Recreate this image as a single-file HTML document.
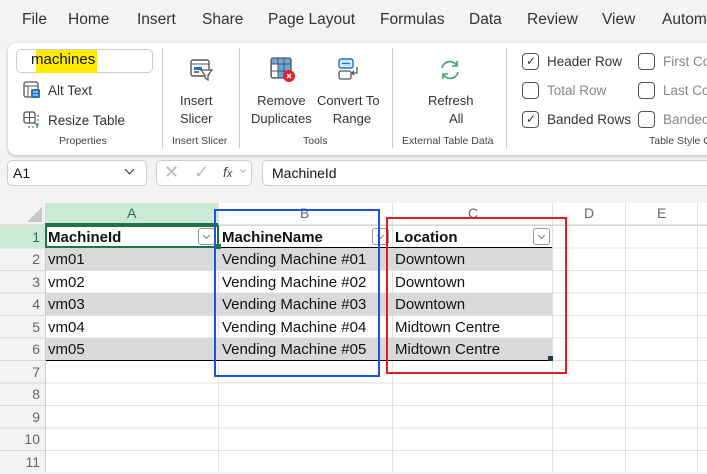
<!DOCTYPE html>
<html><head><meta charset="utf-8"><style>
*{margin:0;padding:0;box-sizing:border-box}
body{width:707px;height:472px;overflow:hidden;background:#f3f3f3;font-family:"Liberation Sans",sans-serif;position:relative;color:#222}
.a{position:absolute;white-space:nowrap}
.tab{top:11px;font-size:15.5px;color:#333}
.rib{left:8px;top:43px;width:720px;height:112px;background:#fff;border-radius:8px;box-shadow:0 1px 3px rgba(0,0,0,.25)}
.sep{width:1px;background:#ccc;top:48px;height:100px}
.lbl{font-size:10.5px;color:#444;top:135px}
.btn{font-size:13px;color:#333;text-align:center;line-height:18px}
.cb{width:17px;height:17px;border:1px solid #555;border-radius:4px;background:#fff}
.ck{font-size:13.5px;color:#333}
.dim{color:#888}
.cell{font-size:15px;color:#111;height:22px;line-height:23px}
.rh{left:0;width:45px;text-align:right;padding-right:5px;font-size:14px;color:#666;height:22px;line-height:23px}
.dd{width:17px;height:17px;border:1px solid #999;border-radius:3px;background:#fff}
.dd:after{content:"";position:absolute;left:5px;top:4px;width:4px;height:4px;border-right:1px solid #777;border-bottom:1px solid #777;transform:rotate(45deg)}
</style></head><body>
<div class="a tab" style="left:22px">File</div>
<div class="a tab" style="left:68px">Home</div>
<div class="a tab" style="left:137px">Insert</div>
<div class="a tab" style="left:202px">Share</div>
<div class="a tab" style="left:268px">Page Layout</div>
<div class="a tab" style="left:380px">Formulas</div>
<div class="a tab" style="left:469px">Data</div>
<div class="a tab" style="left:527px">Review</div>
<div class="a tab" style="left:602px">View</div>
<div class="a tab" style="left:662px">Autom</div>

<div class="a rib"></div>
<div class="a" style="left:16px;top:49px;width:137px;height:24px;border:1px solid #ccc;border-radius:5px;background:#fff"></div>
<div class="a" style="left:36px;top:50px;width:61px;height:23px;background:#ffeb00"></div>
<div class="a" style="left:31px;top:51px;font-size:15px;color:#111">machines</div>
<svg class="a" style="left:23px;top:81px" width="18" height="18" viewBox="0 0 18 18"><rect x="1" y="1" width="14" height="15" rx="2" fill="none" stroke="#555" stroke-width="1.3"/><line x1="1" y1="5" x2="15" y2="5" stroke="#555"/><line x1="5" y1="5" x2="5" y2="16" stroke="#555"/><rect x="8" y="8" width="9" height="9" rx="1.5" fill="#1e73c9"/><line x1="10" y1="11" x2="15" y2="11" stroke="#fff"/><line x1="10" y1="14" x2="15" y2="14" stroke="#fff"/></svg>
<div class="a ck" style="left:48px;top:83px">Alt Text</div>
<svg class="a" style="left:23px;top:111px" width="18" height="18" viewBox="0 0 18 18"><rect x="1" y="1" width="11" height="11" rx="2" fill="none" stroke="#555" stroke-width="1.3"/><line x1="6.5" y1="1" x2="6.5" y2="12" stroke="#555"/><line x1="1" y1="6.5" x2="12" y2="6.5" stroke="#555"/><path d="M15 4v12H3" fill="none" stroke="#555" stroke-dasharray="2 2"/><path d="M11 11l4 4" stroke="#1e73c9" stroke-width="1.4"/></svg>
<div class="a ck" style="left:48px;top:113px">Resize Table</div>
<div class="a lbl" style="left:59px">Properties</div>
<div class="a sep" style="left:162px"></div>

<svg class="a" style="left:190px;top:58px" width="24" height="24" viewBox="0 0 24 24"><rect x="1" y="2" width="18" height="16" rx="2" fill="none" stroke="#555" stroke-width="1.4"/><line x1="1" y1="6" x2="19" y2="6" stroke="#555"/><rect x="4" y="9" width="8" height="3" fill="#1e73c9"/><rect x="4" y="13" width="5" height="2" fill="#777"/><path d="M11 12h11l-4 5v5l-3-2v-3z" fill="#fff" stroke="#555" stroke-width="1.2"/></svg>
<div class="a btn" style="left:180px;top:92px">Insert<br>Slicer</div>
<div class="a lbl" style="left:172px">Insert Slicer</div>
<div class="a sep" style="left:239px"></div>

<svg class="a" style="left:270px;top:57px" width="26" height="26" viewBox="0 0 26 26"><rect x="1" y="1" width="20" height="20" rx="2" fill="#6aa6e0" stroke="#555" stroke-width="1.3"/><rect x="2" y="7" width="6" height="13" fill="#fff"/><line x1="1" y1="7" x2="21" y2="7" stroke="#555"/><line x1="8" y1="1" x2="8" y2="21" stroke="#555"/><line x1="14" y1="1" x2="14" y2="21" stroke="#555"/><line x1="1" y1="14" x2="21" y2="14" stroke="#555"/><circle cx="19" cy="19" r="6" fill="#e0262c"/><path d="M17 17l4 4M21 17l-4 4" stroke="#fff" stroke-width="1.3"/></svg>
<div class="a btn" style="left:251px;top:92px">Remove<br>Duplicates</div>
<svg class="a" style="left:337px;top:57px" width="24" height="24" viewBox="0 0 24 24"><rect x="2" y="2" width="14" height="9" rx="2" fill="#d6e8fa" stroke="#1e73c9" stroke-width="1.4"/><line x1="5" y1="6.5" x2="13" y2="6.5" stroke="#1e73c9" stroke-width="1.3"/><rect x="2" y="14" width="12" height="8" rx="2" fill="none" stroke="#555" stroke-width="1.3"/><path d="M20 10v6h-5M17 14l-2 2 2 2" fill="none" stroke="#555" stroke-width="1.3"/></svg>
<div class="a btn" style="left:317px;top:92px">Convert To<br>&nbsp;&nbsp;Range</div>
<div class="a lbl" style="left:303px">Tools</div>
<div class="a sep" style="left:392px"></div>

<svg class="a" style="left:438px;top:58px" width="24" height="24" viewBox="0 0 24 24"><path d="M4 10A8 8 0 0 1 19 8M20 14A8 8 0 0 1 5 16" fill="none" stroke="#3aa76d" stroke-width="1.6"/><path d="M19 3v5h-5M5 21v-5h5" fill="none" stroke="#3aa76d" stroke-width="1.6"/></svg>
<div class="a btn" style="left:428px;top:92px">Refresh<br>&nbsp;&nbsp;&nbsp;All</div>
<div class="a lbl" style="left:402px">External Table Data</div>
<div class="a sep" style="left:506px"></div>

<div class="a cb" style="left:522px;top:53px"></div><div class="a" style="left:526px;top:54px;font-size:12px;color:#333">✓</div>
<div class="a ck" style="left:547px;top:54px">Header Row</div>
<div class="a cb" style="left:522px;top:82px"></div>
<div class="a ck dim" style="left:547px;top:83px">Total Row</div>
<div class="a cb" style="left:522px;top:111px"></div><div class="a" style="left:526px;top:112px;font-size:12px;color:#333">✓</div>
<div class="a ck" style="left:547px;top:112px">Banded Rows</div>
<div class="a cb" style="left:638px;top:53px"></div><div class="a ck dim" style="left:663px;top:54px">First Co</div>
<div class="a cb" style="left:638px;top:82px"></div><div class="a ck dim" style="left:663px;top:83px">Last Co</div>
<div class="a cb" style="left:638px;top:111px"></div><div class="a ck dim" style="left:663px;top:112px">Banded</div>
<div class="a lbl" style="left:649px">Table Style O</div>

<div class="a" style="left:7px;top:160px;width:140px;height:26px;border:1px solid #ccc;border-radius:5px;background:#fff"></div>
<div class="a" style="left:13px;top:165px;font-size:14px;color:#111">A1</div>
<div class="a" style="left:126px;top:166px;width:7px;height:7px;border-right:1.4px solid #333;border-bottom:1.4px solid #333;transform:rotate(45deg)"></div>
<div class="a" style="left:156px;top:160px;width:96px;height:26px;border:1px solid #ccc;border-radius:5px;background:#fff"></div>
<div class="a" style="left:164px;top:162px;font-size:18px;color:#bbb">✕</div>
<div class="a" style="left:194px;top:162px;font-size:18px;color:#bbb">✓</div>
<div class="a" style="left:223px;top:164px;font-size:14px;font-style:italic;color:#444">f<span style="font-size:11px">x</span></div>
<div class="a" style="left:241px;top:168px;width:4px;height:4px;border-right:1px solid #aaa;border-bottom:1px solid #aaa;transform:rotate(45deg)"></div>
<div class="a" style="left:262px;top:160px;width:460px;height:26px;border:1px solid #ccc;border-radius:5px;background:#fff"></div>
<div class="a" style="left:272px;top:165px;font-size:14px;color:#111">MachineId</div>

<div class="a" style="left:45px;top:203px;width:662px;height:269px;background:#fff"></div>
<svg class="a" style="left:0;top:195px" width="707" height="277">
<g stroke="#e1e1e1" stroke-width="1">
<line x1="45" y1="30.5" x2="707" y2="30.5"/>
<line x1="45" y1="53" x2="707" y2="53"/><line x1="45" y1="75.5" x2="707" y2="75.5"/><line x1="45" y1="98" x2="707" y2="98"/><line x1="45" y1="120.5" x2="707" y2="120.5"/><line x1="45" y1="143" x2="707" y2="143"/><line x1="45" y1="165.5" x2="707" y2="165.5"/><line x1="45" y1="188" x2="707" y2="188"/><line x1="45" y1="210.5" x2="707" y2="210.5"/><line x1="45" y1="233" x2="707" y2="233"/><line x1="45" y1="255.5" x2="707" y2="255.5"/>
<line x1="218.5" y1="8" x2="218.5" y2="277"/><line x1="392.5" y1="8" x2="392.5" y2="277"/><line x1="552.5" y1="8" x2="552.5" y2="277"/><line x1="625.5" y1="8" x2="625.5" y2="277"/><line x1="697.5" y1="8" x2="697.5" y2="277"/>
</g>
<g stroke="#d6d6d6"><line x1="0" y1="53" x2="45" y2="53"/><line x1="0" y1="75.5" x2="45" y2="75.5"/><line x1="0" y1="98" x2="45" y2="98"/><line x1="0" y1="120.5" x2="45" y2="120.5"/><line x1="0" y1="143" x2="45" y2="143"/><line x1="0" y1="165.5" x2="45" y2="165.5"/><line x1="0" y1="188" x2="45" y2="188"/><line x1="0" y1="210.5" x2="45" y2="210.5"/><line x1="0" y1="233" x2="45" y2="233"/><line x1="0" y1="255.5" x2="45" y2="255.5"/></g>
<line x1="45.5" y1="8" x2="45.5" y2="277" stroke="#ccc"/>
<line x1="0" y1="30" x2="707" y2="30" stroke="#ccc"/>
<path d="M42 12v15H27z" fill="#c8c8c8"/>
</svg>
<div class="a" style="left:45px;top:203px;width:173px;height:22px;background:#caead6;border-bottom:2px solid #217346"></div>
<div class="a" style="left:0;top:226px;width:45px;height:22px;background:#caead6"></div>
<div class="a" style="left:127px;top:205px;font-size:14px;color:#217346">A</div>
<div class="a" style="left:300px;top:205px;font-size:14px;color:#666">B</div>
<div class="a" style="left:468px;top:205px;font-size:14px;color:#666">C</div>
<div class="a" style="left:584px;top:205px;font-size:14px;color:#666">D</div>
<div class="a" style="left:657px;top:205px;font-size:14px;color:#666">E</div>

<div class="a rh" style="top:226px;color:#217346">1</div>
<div class="a rh" style="top:248px">2</div><div class="a rh" style="top:271px">3</div><div class="a rh" style="top:293px">4</div><div class="a rh" style="top:316px">5</div><div class="a rh" style="top:338px">6</div><div class="a rh" style="top:361px">7</div><div class="a rh" style="top:383px">8</div><div class="a rh" style="top:406px">9</div><div class="a rh" style="top:428px">10</div><div class="a rh" style="top:451px">11</div>

<div class="a" style="left:46px;top:248px;width:506px;height:22px;background:#d9d9d9"></div>
<div class="a" style="left:46px;top:293px;width:506px;height:22px;background:#d9d9d9"></div>
<div class="a" style="left:46px;top:338px;width:506px;height:22px;background:#d9d9d9"></div>
<div class="a" style="left:46px;top:247px;width:506px;height:1px;background:#000"></div>
<div class="a" style="left:46px;top:360px;width:506px;height:1px;background:#000"></div>
<div class="a" style="left:45px;top:225px;width:174px;height:23px;border:2px solid #217346"></div>
<div class="a" style="left:216px;top:244px;width:5px;height:5px;background:#217346"></div>
<div class="a" style="left:548px;top:356px;width:5px;height:5px;background:#1f3b5a"></div>

<div class="a cell" style="left:48px;top:226px;font-weight:bold">MachineId</div>
<div class="a cell" style="left:222px;top:226px;font-weight:bold">MachineName</div>
<div class="a cell" style="left:395px;top:226px;font-weight:bold">Location</div>
<div class="a dd" style="left:198px;top:228px"></div>
<div class="a dd" style="left:372px;top:228px"></div>
<div class="a dd" style="left:533px;top:228px"></div>

<div class="a cell" style="left:48px;top:248px">vm01</div>
<div class="a cell" style="left:48px;top:271px">vm02</div>
<div class="a cell" style="left:48px;top:293px">vm03</div>
<div class="a cell" style="left:48px;top:316px">vm04</div>
<div class="a cell" style="left:48px;top:338px">vm05</div>
<div class="a cell" style="left:222px;top:248px">Vending Machine #01</div>
<div class="a cell" style="left:222px;top:271px">Vending Machine #02</div>
<div class="a cell" style="left:222px;top:293px">Vending Machine #03</div>
<div class="a cell" style="left:222px;top:316px">Vending Machine #04</div>
<div class="a cell" style="left:222px;top:338px">Vending Machine #05</div>
<div class="a cell" style="left:395px;top:248px">Downtown</div>
<div class="a cell" style="left:395px;top:271px">Downtown</div>
<div class="a cell" style="left:395px;top:293px">Downtown</div>
<div class="a cell" style="left:395px;top:316px">Midtown Centre</div>
<div class="a cell" style="left:395px;top:338px">Midtown Centre</div>

<div class="a" style="left:214px;top:209px;width:166px;height:168px;border:2px solid #1a56db"></div>
<div class="a" style="left:386px;top:217px;width:181px;height:157px;border:2px solid #e31b1b"></div>
</body></html>
